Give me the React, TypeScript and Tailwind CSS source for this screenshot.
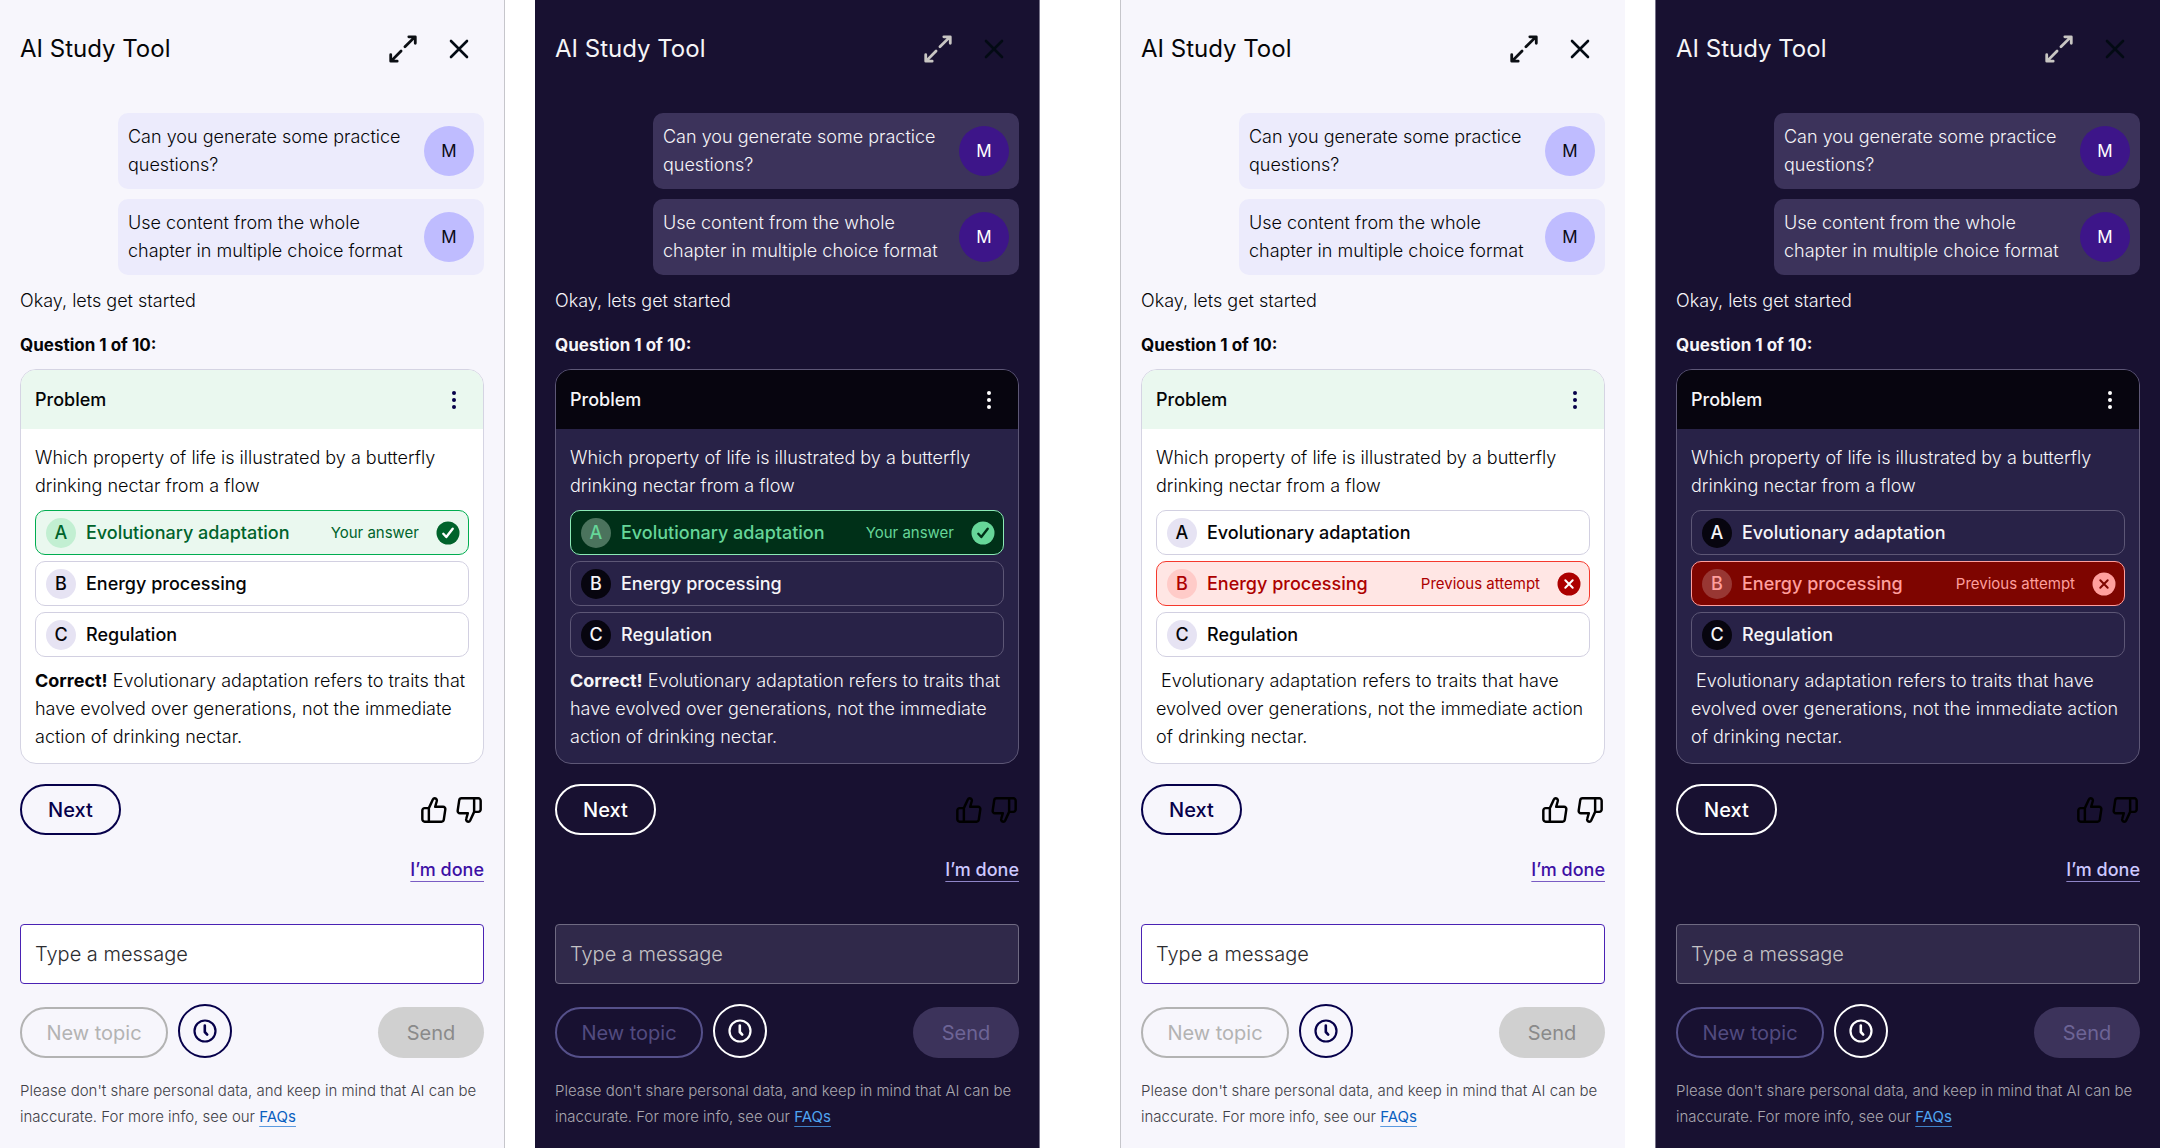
import React from "react";
import clsx from "clsx";

type Mode = "light" | "dark";
type Result = "correct" | "incorrect";

const themes = {
  light: {
    panel: "bg-[#f7f6fc] text-[#050507]",
    edge: "border-[#c6c6cb]",
    expand: "text-[#0c0f14]",
    close: "text-[#030a14]",
    bubble: "bg-[#ecebfc]",
    avatar: "bg-[#bfbcff] text-[#0a0a14]",
    card: "bg-white border-[#d5d4e3]",
    cardHeader: "bg-[#eaf8ef]",
    dots: "text-[#06004a]",
    option: "border-[#d2d0e1]",
    badge: "bg-[#e6e3f3]",
    correct: "border-[#00ad50] bg-[#eaf8ef] text-[#00632b]",
    correctBadge: "bg-[#c2efd2]",
    incorrect: "border-[#f5392d] bg-[#ffe6e4] text-[#ac0000]",
    incorrectBadge: "bg-[#ffcbc8]",
    correctMark: "#ffffff",
    incorrectMark: "#ffffff",
    outline: "border-[#06004a] text-[#06004a]",
    done: "text-[#3d10a5] decoration-[#7a5cc4]",
    input: "bg-white border-[#4a22b4] placeholder:text-[#2c2c2f]",
    ghost: "border-[#b3b3b3] text-[#b3b3b3]",
    send: "bg-[#d0d0d0] text-[#8a8a8a]",
    note: "text-[#404046]",
    link: "text-[#0a5fc0] decoration-[#5b9ae0]",
  },
  dark: {
    panel: "bg-[#181131] text-[#f6f5f8]",
    edge: "border-[#77738a]",
    expand: "text-[#c8c6c3]",
    close: "text-[#030a14]",
    bubble: "bg-[#3c335b]",
    avatar: "bg-[#3d1589] text-white",
    card: "bg-[#282247] border-[#5d5776]",
    cardHeader: "bg-[#07050f]",
    dots: "text-white",
    option: "border-[#5d5776]",
    badge: "bg-[#07050f]",
    correct: "border-[#8ceab6] bg-[#003018] text-[#66d699]",
    correctBadge: "bg-[#4b735d]",
    incorrect: "border-[#ff9f9d] bg-[#7e0500] text-[#ff9f9d]",
    incorrectBadge: "bg-[#983733]",
    correctMark: "#003018",
    incorrectMark: "#7e0500",
    outline: "border-white text-white",
    done: "text-[#cdc8ff] decoration-[#8f86c8]",
    input: "bg-[#30294a] border-[#6f6a82] placeholder:text-[#c4c2c5]",
    ghost: "border-[#55508a] text-[#524b80]",
    send: "bg-[#3c335b] text-[#6d6496]",
    note: "text-[#a9a7af]",
    link: "text-[#4fa5f2] decoration-[#3f7fc4]",
  },
};

type Theme = (typeof themes)["light"];

const ExpandIcon = () => (
  <svg width="28" height="28" viewBox="0 0 26 26" fill="none" stroke="currentColor" strokeWidth="2.6" strokeLinecap="round" strokeLinejoin="round" aria-hidden="true">
    <path d="M14.8 11 23.6 2.2M18.4 1.7h6v6" />
    <path d="M11.2 14.8 2.4 23.8M7.6 24.3h-6v-6" />
  </svg>
);

const CloseIcon = () => (
  <svg width="26" height="26" viewBox="0 0 26 26" fill="none" stroke="currentColor" strokeWidth="2.6" strokeLinecap="round" aria-hidden="true">
    <path d="m5 5 16 16M21 5 5 21" />
  </svg>
);

const ThumbIcon = ({ down = false }: { down?: boolean }) => (
  <svg width="28" height="28" viewBox="0 0 24 24" fill="none" stroke="currentColor" strokeWidth="2.1" strokeLinecap="round" strokeLinejoin="round" className={clsx(down && "rotate-180")} aria-hidden="true">
    <path d="M7.6 10.4 11 3a1.8 1.8 0 0 1 1.7-1 1.9 1.9 0 0 1 1.6 2.7L13 9.2h6.7a2 2 0 0 1 2 2.3l-1.3 8.8a2 2 0 0 1-2 1.7H4a2 2 0 0 1-2-2v-7.6a2 2 0 0 1 2-2h3.6V22" />
  </svg>
);

const ClockIcon = () => (
  <svg width="26" height="26" viewBox="0 0 26 26" fill="none" stroke="currentColor" strokeWidth="2.2" strokeLinecap="round" strokeLinejoin="round" aria-hidden="true">
    <circle cx="13" cy="13" r="10.5" />
    <path strokeWidth="2.6" d="M12.8 7.5v6.5l2.4 2.6" />
  </svg>
);

const DotsIcon = () => (
  <svg width="20" height="20" viewBox="0 0 20 20" fill="currentColor" aria-hidden="true">
    <circle cx="10" cy="3" r="2" />
    <circle cx="10" cy="10" r="2" />
    <circle cx="10" cy="17" r="2" />
  </svg>
);

function ResultIcon({ result, mark }: { result: Result; mark: string }) {
  return (
    <svg width="24" height="24" viewBox="0 0 24 24" fill="none" aria-hidden="true">
      <circle cx="12" cy="12" r="11.5" fill="currentColor" />
      <path
        d={result === "correct" ? "m7.3 12.8 3 3.2L16.7 7.8" : "m8.3 8.3 7.4 7.4M15.7 8.3l-7.4 7.4"}
        stroke={mark}
        strokeWidth={result === "correct" ? 2.4 : 2}
        strokeLinecap="round"
        strokeLinejoin="round"
      />
    </svg>
  );
}

function Bubble({ theme, children }: { theme: Theme; children: React.ReactNode }) {
  return (
    <div className={clsx("flex w-[366px] max-w-full items-center justify-between gap-2 self-end rounded-[10px] p-2.5", theme.bubble)}>
      <p>{children}</p>
      <span className={clsx("flex size-[50px] shrink-0 items-center justify-center rounded-full text-[17px] font-normal", theme.avatar)}>M</span>
    </div>
  );
}

const options = [
  { letter: "A", label: "Evolutionary adaptation" },
  { letter: "B", label: "Energy processing" },
  { letter: "C", label: "Regulation" },
];

function Option({ theme, letter, label, result }: { theme: Theme; letter: string; label: string; result?: Result }) {
  const tone = result === "correct" ? theme.correct : result === "incorrect" ? theme.incorrect : theme.option;
  const badge = result === "correct" ? theme.correctBadge : result === "incorrect" ? theme.incorrectBadge : theme.badge;
  return (
    <button type="button" className={clsx("flex h-[45px] items-center gap-2.5 rounded-[10px] border pr-2 pl-2.5 text-left text-lg font-medium", tone)}>
      <span className={clsx("flex size-[30px] items-center justify-center rounded-full", badge)}>{letter}</span>
      <span>{label}</span>
      {result && (
        <span className="ml-auto flex items-center gap-[17px] text-[15px] font-normal">
          {result === "correct" ? "Your answer" : "Previous attempt"}
          <ResultIcon result={result} mark={result === "correct" ? theme.correctMark : theme.incorrectMark} />
        </span>
      )}
    </button>
  );
}

function StudyPanel({ mode, answer, result, edges }: { mode: Mode; answer: string; result: Result; edges: string }) {
  const theme = themes[mode];
  return (
    <section className={clsx("flex min-h-screen min-w-0 flex-1 flex-col px-5 pt-8 pb-4 text-lg leading-[28px] font-light", theme.panel, theme.edge, edges)}>
      <header className="mb-12 flex h-[33px] items-center justify-between">
        <h1 className="text-2xl font-normal">AI Study Tool</h1>
        <div className="flex items-center gap-[29px] pr-3">
          <button type="button" aria-label="Expand" className={theme.expand}><ExpandIcon /></button>
          <button type="button" aria-label="Close" className={theme.close}><CloseIcon /></button>
        </div>
      </header>

      <div className="flex flex-col gap-2.5">
        <Bubble theme={theme}>Can you generate some practice<br />questions?</Bubble>
        <Bubble theme={theme}>Use content from the whole<br />chapter in multiple choice format</Bubble>
      </div>
      <p className="mt-3">Okay, lets get started</p>
      <h2 className="mt-4 text-[17px] leading-[28px] font-bold">Question 1 of 10:</h2>

      <article className={clsx("mt-2.5 overflow-hidden rounded-2xl border", theme.card)}>
        <div className={clsx("flex h-[59px] items-center justify-between px-3.5", theme.cardHeader)}>
          <h3 className="text-lg font-medium">Problem</h3>
          <button type="button" aria-label="More options" className={clsx("pr-[5px]", theme.dots)}><DotsIcon /></button>
        </div>
        <div className="flex flex-col gap-2.5 px-3.5 pt-[15px] pb-3">
          <p>Which property of life is illustrated by a butterfly<br />drinking nectar from a flow</p>
          <div className="flex flex-col gap-1.5">
            {options.map((o) => (
              <Option key={o.letter} theme={theme} letter={o.letter} label={o.label} result={o.letter === answer ? result : undefined} />
            ))}
          </div>
          {result === "correct" ? (
            <p><strong className="font-bold">Correct!</strong> Evolutionary adaptation refers to traits that have evolved over generations, not the immediate action of drinking nectar.</p>
          ) : (
            <p>{"\u00a0"}Evolutionary adaptation refers to traits that have evolved over generations, not the immediate action of drinking nectar.</p>
          )}
        </div>
      </article>

      <div className="mt-5 flex items-center justify-between">
        <button type="button" className={clsx("h-[51px] rounded-full border-2 px-[26px] text-xl font-medium", theme.outline)}>Next</button>
        <div className="flex gap-[7px] pr-px text-black">
          <button type="button" aria-label="Helpful"><ThumbIcon /></button>
          <button type="button" aria-label="Not helpful"><ThumbIcon down /></button>
        </div>
      </div>
      <a href="#done" className={clsx("mt-[21px] self-end text-lg leading-[28px] font-medium underline decoration-1 underline-offset-[5px]", theme.done)}>I’m done</a>

      <input type="text" aria-label="Message" placeholder="Type a message" className={clsx("mt-10 h-[60px] w-full rounded-[4px] border px-3.5 text-xl placeholder:opacity-100", theme.input)} />
      <div className="mt-5 flex items-end gap-2.5">
        <button type="button" disabled className={clsx("h-[51px] w-[148px] rounded-full border-2 text-xl font-normal", theme.ghost)}>New topic</button>
        <button type="button" aria-label="History" className={clsx("flex size-[54px] items-center justify-center rounded-full border-2", theme.outline)}><ClockIcon /></button>
        <button type="button" disabled className={clsx("ml-auto h-[51px] w-[106px] rounded-full text-xl font-normal", theme.send)}>Send</button>
      </div>
      <p className={clsx("mt-5 text-[15px] leading-[26px]", theme.note)}>
        Please don't share personal data, and keep in mind that AI can be inaccurate. For more info, see our{" "}
        <a href="#faqs" className={clsx("font-normal underline underline-offset-4", theme.link)}>FAQs</a>
      </p>
    </section>
  );
}

export default function App() {
  return (
    <main className="flex min-h-screen gap-20 bg-white font-['Inter',sans-serif]">
      <div className="flex flex-1 gap-[30px]">
        <StudyPanel mode="light" answer="A" result="correct" edges="border-r" />
        <StudyPanel mode="dark" answer="A" result="correct" edges="border-r" />
      </div>
      <div className="flex flex-1 gap-[30px]">
        <StudyPanel mode="light" answer="B" result="incorrect" edges="border-l" />
        <StudyPanel mode="dark" answer="B" result="incorrect" edges="border-l" />
      </div>
    </main>
  );
}
